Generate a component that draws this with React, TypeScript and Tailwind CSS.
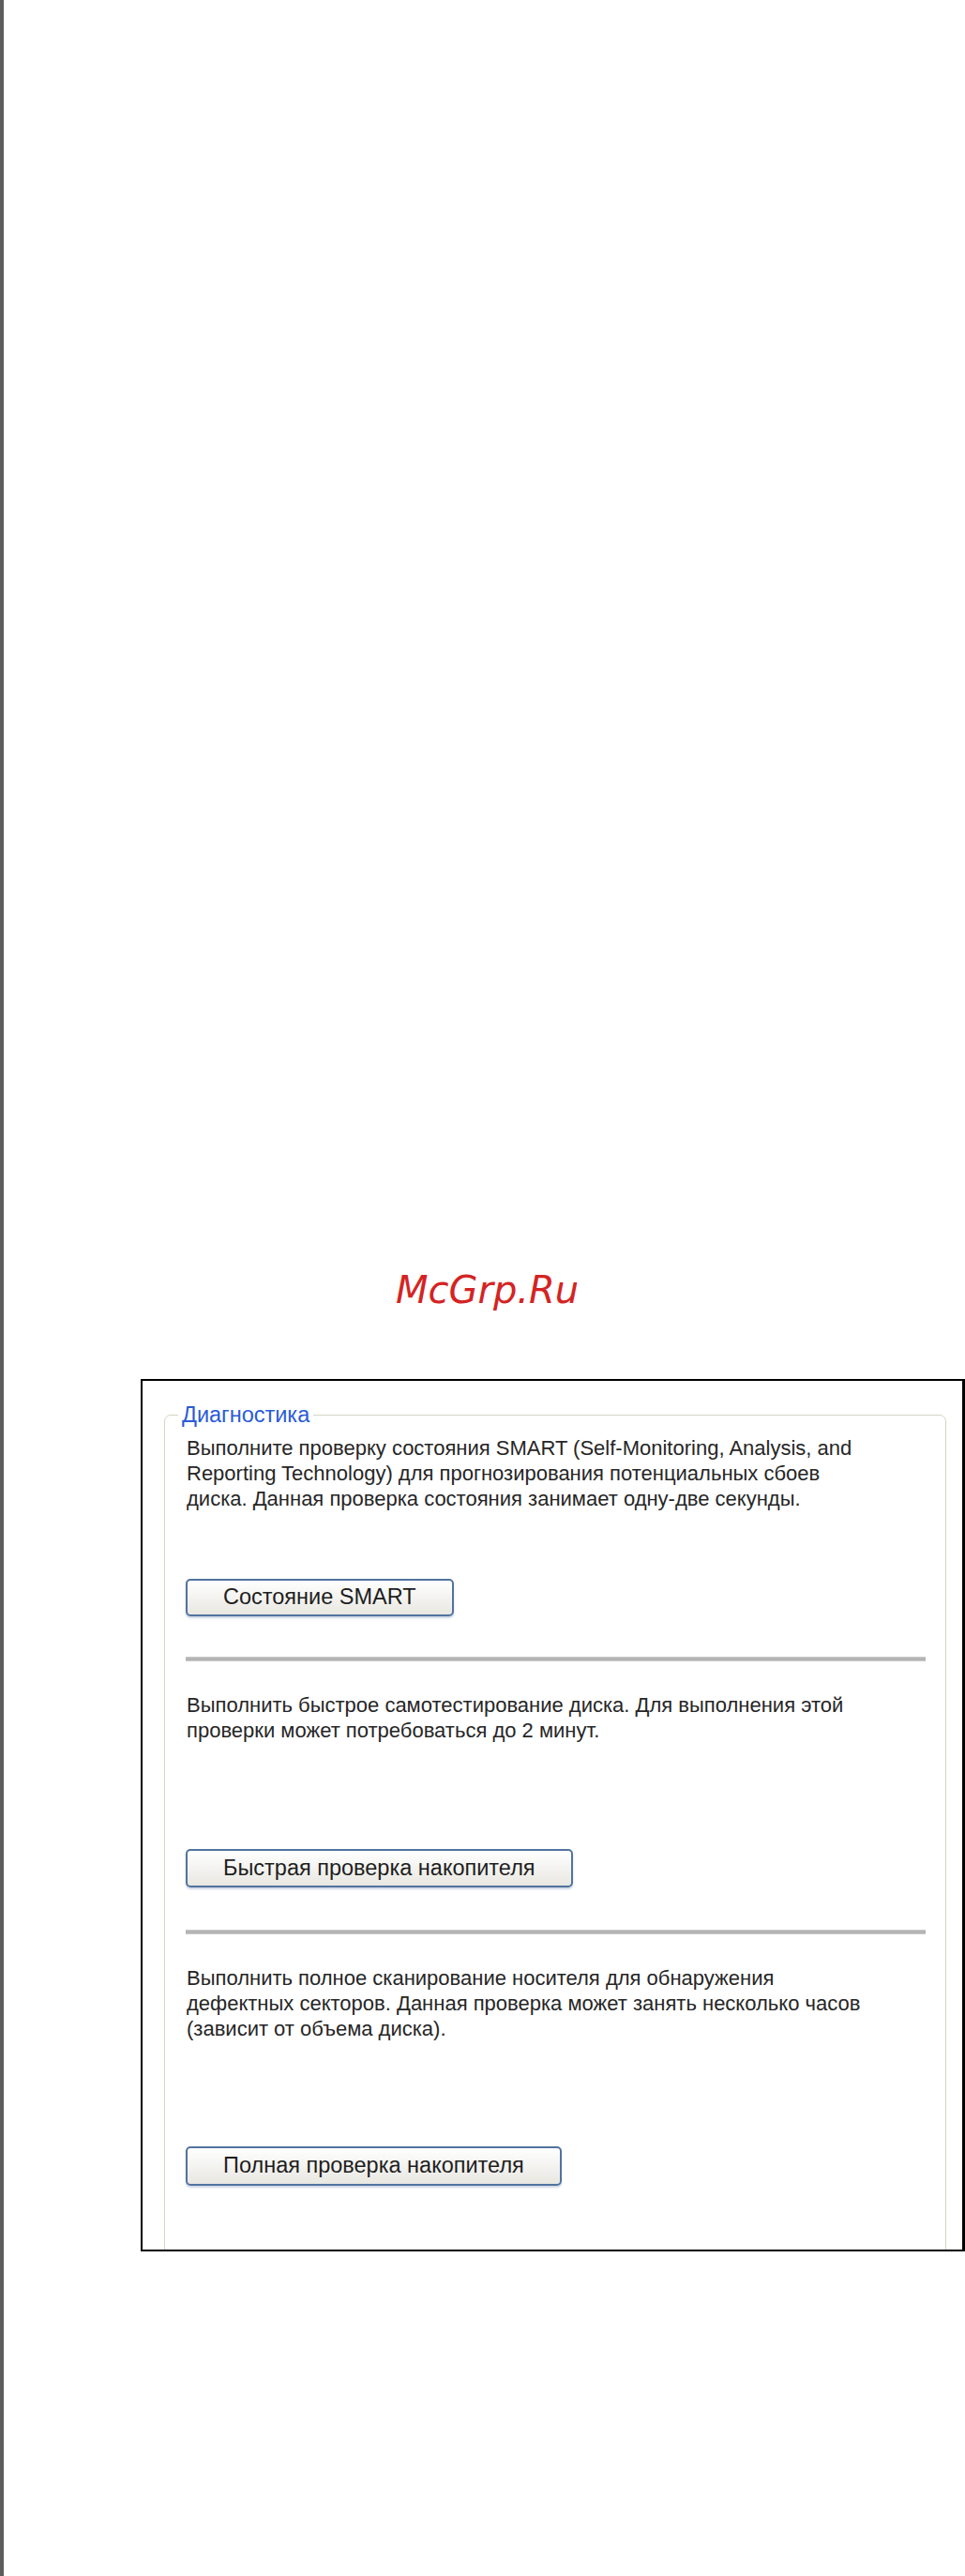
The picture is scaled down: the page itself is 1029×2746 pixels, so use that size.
export default function App() {
  const sections = [
    {
      lines: [
        "Выполните проверку состояния SMART (Self-Monitoring, Analysis, and",
        "Reporting Technology) для прогнозирования потенциальных сбоев",
        "диска. Данная проверка состояния занимает одну-две секунды.",
      ],
      label: "Состояние SMART",
      btnGap: "mt-[72px] h-[40px]",
    },
    {
      lines: [
        "Выполнить быстрое самотестирование диска. Для выполнения этой",
        "проверки может потребоваться до 2 минут.",
      ],
      label: "Быстрая проверка накопителя",
      btnGap: "mt-[113px] h-[41px]",
    },
    {
      lines: [
        "Выполнить полное сканирование носителя для обнаружения",
        "дефектных секторов. Данная проверка может занять несколько часов",
        "(зависит от объема диска).",
      ],
      label: "Полная проверка накопителя",
      btnGap: "mt-[112px] h-[42px]",
    },
  ];

  return (
    <div className="min-h-[2746px] w-[1029px] bg-white border-l-4 border-[#5c5c5c] font-['Liberation_Sans',Arial,sans-serif] overflow-hidden">
      {/* watermark */}
      <div className="pt-[1351px] pl-[418px] h-[1399px]">
        <div className="text-[40px] leading-[48px] italic text-[#d42424] font-['DejaVu_Sans',sans-serif] whitespace-nowrap">
          McGrp.Ru
        </div>
      </div>

      <div className="mt-[71px] ml-[146px] w-[879px] h-[930px] border-2 border-r-[3px] border-black overflow-hidden">
        <fieldset className="mt-[24px] ml-[23px] w-[834px] h-[1000px] border border-[#d4d4c6] rounded-[7px] pl-[22px] pr-[21px]">
          <legend className="ml-[-8px] px-1 text-[23.5px] leading-[24px] text-[#2a5bd7]">
            Диагностика
          </legend>
          {sections.map((s, i) => (
            <div key={i}>
              {i > 0 && (
                <div
                  className={
                    i === 1
                      ? "mt-[43px] h-[5px] bg-[#b4b4b4] border-y border-[#c9c9c9]"
                      : "mt-[45px] h-[5px] bg-[#b4b4b4] border-y border-[#c9c9c9]"
                  }
                />
              )}
              <p
                className={
                  i === 0
                    ? "mt-[10px] pl-px text-[22px] leading-[27px] text-[#262626]"
                    : "mt-[33px] pl-px text-[22px] leading-[27px] text-[#262626]"
                }
              >
                {s.lines.map((l) => (
                  <span key={l} className="block whitespace-nowrap">
                    {l}
                  </span>
                ))}
              </p>
              <button
                className={
                  s.btnGap +
                  " px-[38px] flex items-center border-2 border-[#52739f] rounded-[5px] bg-gradient-to-b from-white to-[#e8e7e1] text-[23.5px] text-[#1e1e1e] shadow-[0_2px_2px_rgba(90,120,170,0.3)]"
                }
              >
                {s.label}
              </button>
            </div>
          ))}
        </fieldset>
      </div>
    </div>
  );
}
